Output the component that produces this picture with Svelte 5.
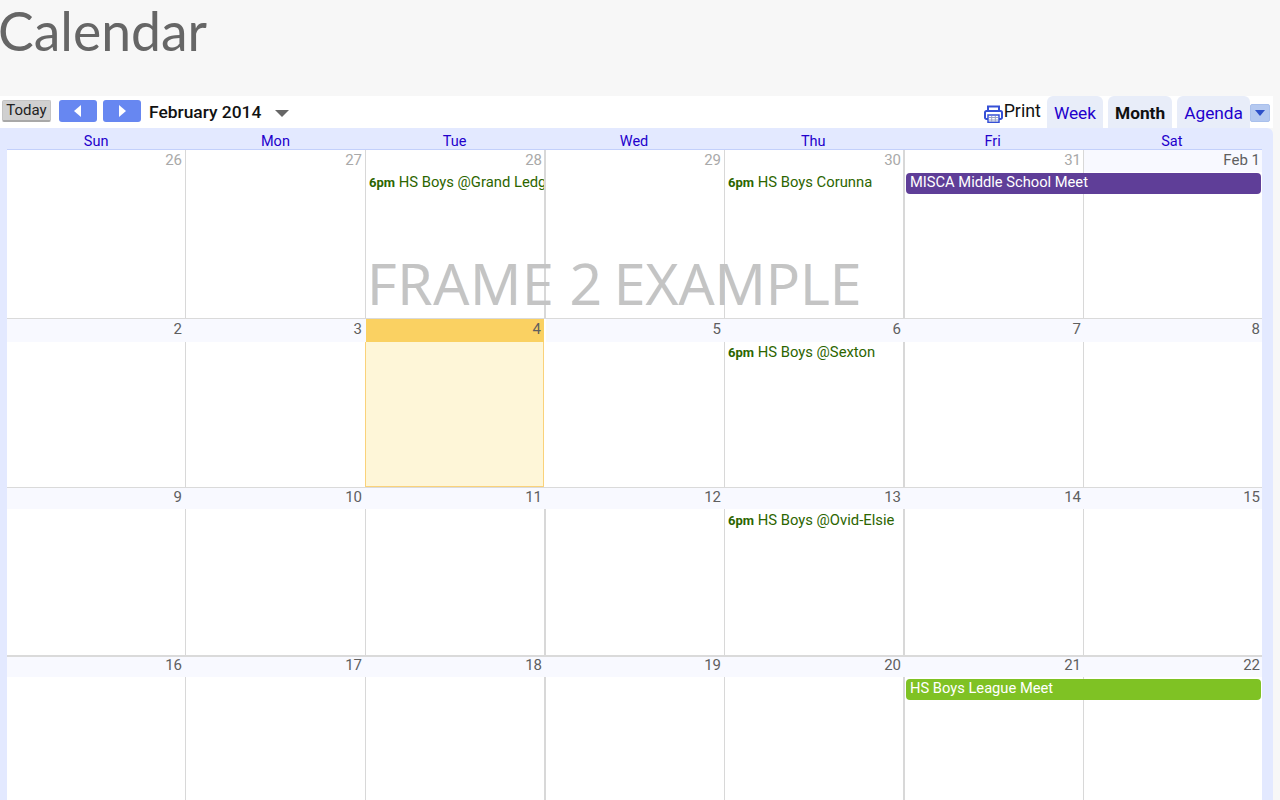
<script>
  const days = ['Sun', 'Mon', 'Tue', 'Wed', 'Thu', 'Fri', 'Sat'];
  const weeks = [
    {
      h: 168, band: 22, bg: 22, lh: 21, border: 0,
      cells: [
        { n: '26', off: true }, { n: '27', off: true }, { n: '28', off: true }, { n: '29', off: true },
        { n: '30', off: true }, { n: '31', off: true }, { n: 'Feb 1' }
      ],
      timed: [
        { col: 3, title: 'HS Boys @Grand Ledge' },
        { col: 5, title: 'HS Boys Corunna' }
      ],
      bars: [{ col: 6, span: 2, title: 'MISCA Middle School Meet', cls: 'purple' }]
    },
    {
      h: 169, band: 23, bg: 23, lh: 21, border: 1,
      cells: [
        { n: '2' }, { n: '3' }, { n: '4', today: true }, { n: '5', afterToday: true }, { n: '6' }, { n: '7' }, { n: '8' }
      ],
      timed: [{ col: 5, title: 'HS Boys @Sexton' }],
      bars: []
    },
    {
      h: 168, band: 22, bg: 21, lh: 19, border: 1,
      cells: [
        { n: '9' }, { n: '10' }, { n: '11' }, { n: '12' }, { n: '13' }, { n: '14' }, { n: '15' }
      ],
      timed: [{ col: 5, title: 'HS Boys @Ovid-Elsie' }],
      bars: []
    },
    {
      h: 145, band: 21, bg: 20, lh: 17, border: 2,
      cells: [
        { n: '16' }, { n: '17' }, { n: '18' }, { n: '19' }, { n: '20' }, { n: '21' }, { n: '22' }
      ],
      timed: [],
      bars: [{ col: 6, span: 2, title: 'HS Boys League Meet', cls: 'green' }]
    }
  ];
</script>

<div class="page">
  <h1>Calendar</h1>
  <div class="toolbar">
    <button class="today-btn">Today</button>
    <button class="nav" aria-label="Previous"><svg width="8" height="12" viewBox="0 0 8 12"><path d="M7 0v12L0 6z" fill="#fff" /></svg></button>
    <button class="nav" aria-label="Next"><svg width="8" height="12" viewBox="0 0 8 12"><path d="M1 0v12l7-6z" fill="#fff" /></svg></button>
    <span class="range">February 2014</span>
    <span class="caret"></span>
    <span class="spacer"></span>
    <svg class="printer" width="19" height="18" viewBox="0 0 19 18" fill="none" stroke="#3650d6" stroke-width="2">
      <path d="M4 6V1.500h11V6" />
      <path d="M4 14H2.500A1.500 1.500 0 0 1 1 12.500V7.500A1.500 1.500 0 0 1 2.500 6h14A1.500 1.500 0 0 1 18 7.500v5a1.500 1.500 0 0 1-1.500 1.500H15" />
      <rect x="4" y="10" width="11" height="7.300" fill="#fff" stroke-width="1.500" />
      <path d="M5 12.500h9M5 15h9M7.700 11v6M11.300 11v6" stroke="#9aa3c8" stroke-width="1" />
    </svg>
    <span class="print">Print</span>
    <span class="tab">Week</span>
    <span class="tab active">Month</span>
    <span class="tab">Agenda</span>
    <span class="drop"><i></i></span>
  </div>
  <div class="body">
    <div class="heads">
      {#each days as d}<div class="head">{d}</div>{/each}
    </div>
    <div class="grid">
      <div class="overlay"><span class="w1">FRAME</span> <span class="w2">2</span> EXAMPLE</div>
      {#each weeks as w, wi}
        <div class="week" style="height:{w.h}px;grid-template-rows:{w.band}px 1fr;border-top-width:{w.border}px">
          {#each w.cells as c, i}
            <div class="bg" class:thick={i === 3 || i === 5} class:lead={i === 0} class:free={c.afterToday} class:now={c.today} style="grid-column:{i + 1}"></div>
            <div class="num" class:off={c.off} class:now={c.today} class:c6={i === 5} class:c7={i === 6} style="grid-column:{i + 1};height:{w.bg}px;line-height:{w.lh}px">{c.n}</div>
          {/each}
          {#each w.timed as e}
            <div class="timed" style="grid-column:{e.col}"><b>6pm</b> {e.title}</div>
          {/each}
          {#each w.bars as b}
            <div class="bar {b.cls}" style="grid-column:{b.col} / span {b.span}">{b.title}</div>
          {/each}
        </div>
      {/each}
    </div>
  </div>
</div>

<style>
  :global(body) {
    margin: 0;
    background: #f7f7f7;
    overflow: hidden;
  }
  .page {
    width: 1280px;
    height: 800px;
    overflow: hidden;
    font-family: Roboto, sans-serif;
  }
  h1 {
    margin: 0 0 0 -2px;
    height: 96px;
    font: 400 53.500px/60px Lato, sans-serif;
    color: #666;
  }
  .toolbar {
    width: 1273px;
    height: 32px;
    background: #fff;
    display: flex;
    align-items: flex-start;
  }
  button {
    padding: 0;
    border: 0;
    font-family: inherit;
  }
  .today-btn {
    margin: 4px 8px 0 2px;
    width: 49px;
    height: 22px;
    box-sizing: border-box;
    background: #d0d0d0;
    border: 1px solid #c4c4c4;
    border-bottom: 2px solid #a8a8a8;
    border-radius: 2px;
    font-size: 15px;
    line-height: 16px;
    padding-bottom: 2px;
    color: #222;
  }
  .nav {
    width: 38px;
    height: 22px;
    margin: 4px 6px 0 0;
    background: #6787f1;
    border-radius: 3px;
    display: flex;
    align-items: center;
    justify-content: center;
  }
  .range {
    margin-left: 2px;
    font-size: 17.400px;
    font-weight: 500;
    line-height: 32px;
    color: #111;
  }
  .caret {
    margin: 14px 0 0 14px;
    border: 7px solid transparent;
    border-top: 7px solid #666;
    border-bottom: 0;
  }
  .spacer {
    flex: 1;
  }
  .printer {
    margin: 9px 1px 0 0;
  }
  .print {
    font-size: 17.800px;
    line-height: 30px;
    color: #111;
    margin-right: 6px;
  }
  .tab {
    height: 32px;
    line-height: 34px;
    padding: 0 7px;
    background: #e8edf9;
    border-radius: 6px 6px 0 0;
    font-size: 17.300px;
    color: #2200cc;
  }
  .tab.active {
    margin: 0 5px;
    font-weight: 700;
    color: #111;
  }
  .drop {
    width: 20px;
    height: 18px;
    margin: 8px 3px 0 0;
    background: #b5c9f0;
    border: 1px solid #a9c0ec;
    box-sizing: border-box;
    border-radius: 2px;
    display: flex;
    align-items: center;
    justify-content: center;
  }
  .drop i {
    border: 5px solid transparent;
    border-top: 6px solid #2d50c8;
    border-bottom: 0;
  }
  .body {
    width: 1273px;
    height: 672px;
    box-sizing: border-box;
    padding: 0 11px 0 7px;
    background: #e3e9ff;
    border-radius: 0 6px 0 0;
  }
  .heads {
    display: grid;
    grid-template-columns: repeat(7, 1fr);
  }
  .week {
    display: grid;
    grid-template-columns: 179px 180px 180px 179px 180px 179px 178px;
  }
  .head {
    height: 21px;
    box-sizing: border-box;
    padding: 5px 1px 0 0;
    text-align: center;
    font-size: 14.500px;
    line-height: 17px;
    color: #2200cc;
  }
  .grid {
    position: relative;
    border-top: 1px solid #c3d0fb;
    background: #fff;
  }
  .overlay {
    position: absolute;
    left: 360px;
    top: 93px;
    font: 400 57px/80px "Open Sans", sans-serif;
    color: #c4c4c4;
    white-space: nowrap;
    z-index: 3;
    text-shadow: -0.500px 0 0 rgba(232, 205, 170, 0.35), 0.500px 0 0 rgba(170, 205, 240, 0.45);
  }
  .w1 {
    letter-spacing: 0.800px;
  }
  .w2 {
    margin-right: -3px;
  }
  .week {
    box-sizing: border-box;
    border-top: 1px solid #dadada;
    overflow: hidden;
  }
  .bg {
    grid-row: 1 / 3;
    border-left: 1px solid #d8d8d8;
    margin-left: -1px;
  }
  .bg.lead {
    border-left: 0;
    margin-left: 0;
  }
  .bg.thick {
    border-left-width: 2px;
    margin-left: -2px;
  }
  .bg.free {
    border-left: 0;
    margin-left: 0;
  }
  .bg.now {
    background: #fef6d8;
    border: 1px solid #fad27a;
    border-top: 0;
    margin: 0 2px 0 -1px;
  }
  .num {
    grid-row: 1;
    text-align: right;
    padding-right: 4px;
    font-size: 15px;
    color: #5f5f5f;
    background: #f8f9ff;
    z-index: 1;
  }
  .num.off {
    color: #a9a9a9;
    background: transparent;
  }
  .num.c6 {
    padding-right: 3px;
  }
  .num.c7 {
    padding-right: 2px;
  }
  .num.now {
    background: #fad162;
    margin-right: 2px;
    padding-right: 3px;
  }
  .timed {
    grid-row: 2;
    padding-left: 3px;
    height: 22px;
    margin-right: 2px;
    font-size: 14.800px;
    line-height: 21px;
    color: #2c6500;
    white-space: nowrap;
    overflow: hidden;
    z-index: 2;
  }
  .timed b {
    font-size: 13px;
    font-weight: 700;
  }
  .bar {
    grid-row: 2;
    margin: 1px 1px 0 1px;
    height: 21px;
    box-sizing: border-box;
    padding-left: 4px;
    border-radius: 4px;
    font-size: 14.700px;
    line-height: 19px;
    color: #fff;
    z-index: 2;
  }
  .purple {
    background: #5f3e98;
  }
  .green {
    background: #7fc224;
  }
</style>
